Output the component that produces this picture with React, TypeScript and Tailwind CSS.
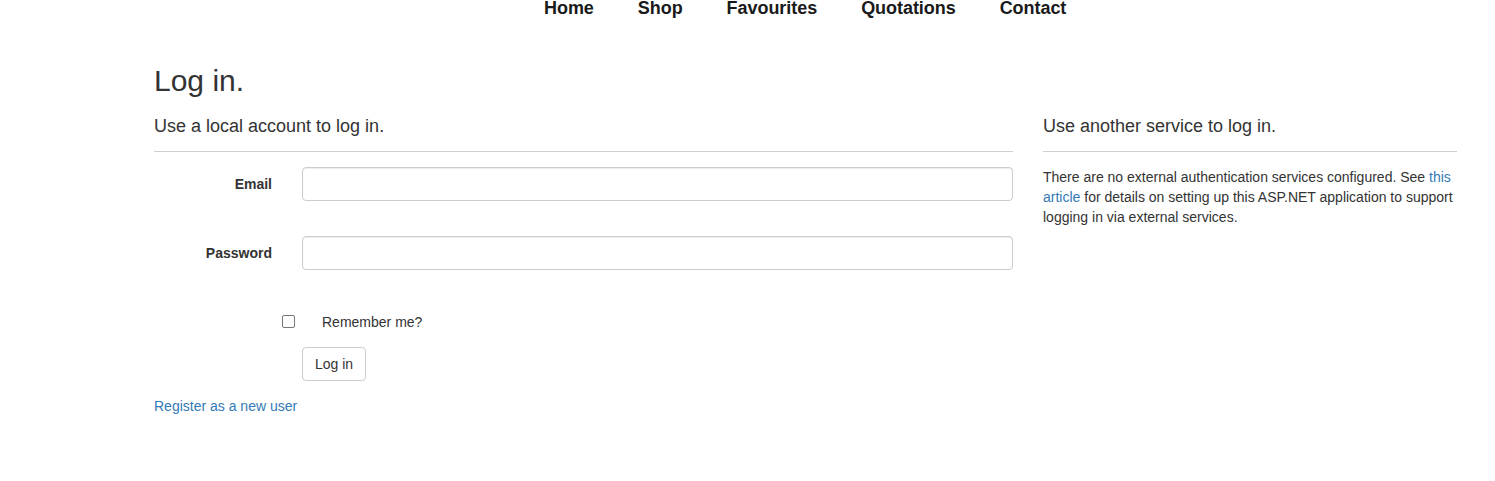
import { useState } from "react";

const navItems = ["Home", "Shop", "Favourites", "Quotations", "Contact"];

export default function App() {
  const [remember, setRemember] = useState(false);

  return (
    <div className="min-h-[481px] bg-white text-[#333] text-[14px] leading-[20px] font-['Liberation_Sans',Arial,Helvetica,sans-serif]">
      {/* top nav */}
      <ul className="flex gap-[44px] pl-[544px] text-[18px] leading-[16px] font-bold tracking-[-0.05px] text-[#1a1a1a]">
        {navItems.map((item) => (
          <li key={item}>
            <a href="#">{item}</a>
          </li>
        ))}
      </ul>

      <div className="pl-[154px] pt-[48px]">
        <h2 className="text-[30px] leading-[33px]">Log in.</h2>

        <div className="flex gap-[30px]">
          {/* local account */}
          <section className="w-[859px]">
            <h4 className="mt-[19px] text-[18px] leading-[20px]">Use a local account to log in.</h4>
            <hr className="mt-[15px] border-0 border-t border-[#cfcfcf]" />

            <form className="mt-[15px]" onSubmit={(e) => e.preventDefault()}>
              <div className="flex">
                <label className="w-[118px] pt-[7px] text-right font-bold">Email</label>
                <input
                  type="email"
                  className="ml-[30px] w-[711px] h-[34px] px-[12px] border border-[#ccc] rounded-[4px] shadow-[inset_0_1px_1px_rgba(0,0,0,0.075)] outline-none"
                />
              </div>
              <div className="flex mt-[35px]">
                <label className="w-[118px] pt-[7px] text-right font-bold">Password</label>
                <input
                  type="password"
                  className="ml-[30px] w-[711px] h-[34px] px-[12px] border border-[#ccc] rounded-[4px] shadow-[inset_0_1px_1px_rgba(0,0,0,0.075)] outline-none"
                />
              </div>

              <label className="flex items-start mt-[42px] pl-[128px] cursor-pointer">
                <input
                  type="checkbox"
                  checked={remember}
                  onChange={(e) => setRemember(e.target.checked)}
                  className="appearance-none mt-[3px] w-[13px] h-[13px] border border-[#767676] rounded-[2px] bg-white checked:bg-[#0075ff] checked:border-[#0075ff]"
                />
                <span className="ml-[27px]">Remember me?</span>
              </label>

              <button
                type="submit"
                className="mt-[15px] ml-[148px] h-[34px] px-[12px] border border-[#ccc] rounded-[4px] bg-white text-[#333] leading-[20px]"
              >
                Log in
              </button>
            </form>

            <p className="mt-[15px]">
              <a href="#" className="text-[#337ab7]">Register as a new user</a>
            </p>
          </section>

          {/* external services */}
          <section className="w-[414px]">
            <h4 className="mt-[19px] text-[18px] leading-[20px]">Use another service to log in.</h4>
            <hr className="mt-[15px] border-0 border-t border-[#cfcfcf]" />
            <p className="mt-[15px]">
              There are no external authentication services configured. See{" "}
              <a href="#" className="text-[#337ab7]">this article</a> for details on setting up this
              ASP.NET application to support logging in via external services.
            </p>
          </section>
        </div>
      </div>
    </div>
  );
}
